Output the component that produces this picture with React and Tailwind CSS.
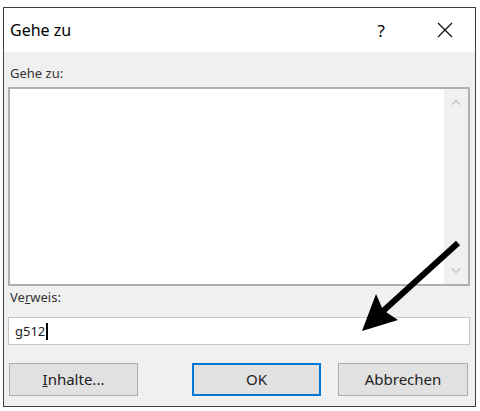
import React from 'react';

export default function App() {
  const font = { fontFamily: '"Noto Sans", "Open Sans", Arial, sans-serif' };

  return (
    <div className="relative w-[480px] h-[411px] bg-white overflow-hidden" style={font}>
      <div className="ml-[3px] mt-[7px] w-[473px] h-[400px] border border-[#3f3f3f] bg-[#f0f0f0] flex flex-col">
        {/* title bar */}
        <div className="h-[44px] bg-white flex items-center shrink-0">
          <span className="ml-[6px] text-[16px] text-black leading-none">Gehe zu</span>
          <span className="ml-auto mr-[52px] text-[17px] text-black leading-none">?</span>
          <svg width="16" height="16" viewBox="0 0 16 16" className="mr-[22px]">
            <path d="M1 1 L15 15 M15 1 L1 15" stroke="#111" strokeWidth="1.3" fill="none" />
          </svg>
        </div>

        <div className="flex-1 flex flex-col pl-[4px] pr-[5px] pt-[12px] pb-[10px]">
          <div className="h-[18px] leading-[18px] text-[13px] text-[#333] pl-[2px]">Gehe zu:</div>

          <div className="mt-[5px] h-[199px] border-2 border-[#b0b0b0] bg-white flex">
            <div className="flex-1" />
            <div className="w-[24px] bg-[#f0f0f0] flex flex-col items-center justify-between py-[10px]">
              <svg width="10" height="6" viewBox="0 0 10 6">
                <path d="M1 5.5 L5 1.5 L9 5.5" stroke="#c2c2c2" strokeWidth="1.4" fill="none" />
              </svg>
              <svg width="10" height="6" viewBox="0 0 10 6">
                <path d="M1 0.5 L5 4.5 L9 0.5" stroke="#c2c2c2" strokeWidth="1.4" fill="none" />
              </svg>
            </div>
          </div>

          <div className="mt-[2px] h-[18px] leading-[18px] text-[13px] text-[#333] pl-[2px]">
            Ve<span className="underline">r</span>weis:
          </div>

          <div className="mt-[11px] h-[28px] border border-[#c6c6c6] bg-white flex items-center pl-[6px]">
            <span className="text-[13px] text-[#222] leading-none">g512</span>
            <span className="ml-[1px] w-[2px] h-[17px] bg-black" />
          </div>

          <div className="mt-[18px] flex items-center">
            <button className="ml-[1px] w-[129px] h-[33px] bg-[#e1e1e1] border border-[#adadad] text-[15px] text-[#222]">
              <span className="underline">I</span>nhalte...
            </button>
            <button className="ml-[54px] w-[129px] h-[33px] bg-[#e1e1e1] border-2 border-[#0078d7] text-[15px] text-[#222]">
              OK
            </button>
            <button className="ml-[17px] w-[130px] h-[33px] bg-[#e1e1e1] border border-[#adadad] text-[15px] text-[#222]">
              Abbrechen
            </button>
          </div>
        </div>
      </div>

      {/* annotation arrow */}
      <svg className="absolute left-0 top-0 pointer-events-none" width="480" height="411" viewBox="0 0 480 411">
        <path d="M458 243 L382 312" stroke="#000" strokeWidth="6" strokeLinecap="butt" />
        <polygon points="362,331 376,294 383,310 398,320" fill="#000" />
      </svg>
    </div>
  );
}
